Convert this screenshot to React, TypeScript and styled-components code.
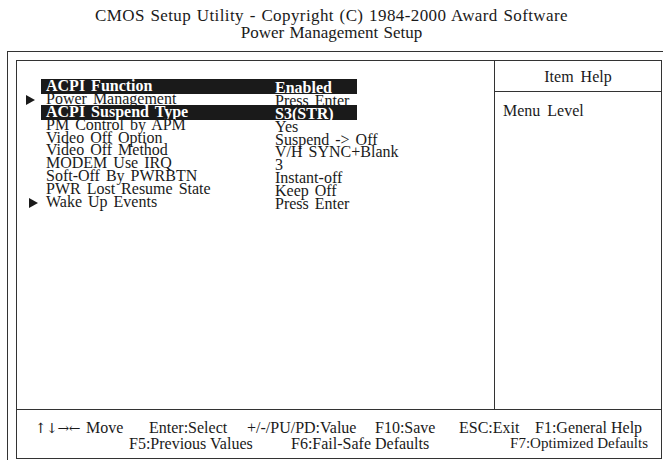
import React from "react";
import styled, {createGlobalStyle} from "styled-components";

const GlobalStyle = createGlobalStyle`
    html, body {
        margin: 0;
        padding: 0;
        background: #fff;
        overflow: hidden;
    }
    body {
        font-family: "Liberation Serif", "Times New Roman", serif;
        color: #1a1a1a;
    }
`;

const StyledHeader = styled.header`
    display: flex;
    flex-direction: column;
    align-items: center;
    padding-top: 7px;
    font-size: 17px;
    line-height: 17px;
    height: 51px;
    box-sizing: border-box;
`;

const StyledTitleLine = styled.div<{ $spacing?: number }>`
    letter-spacing: ${({$spacing}) => $spacing ?? 0}px;
    word-spacing: 1px;
`;

const StyledOuterFrame = styled.div`
    margin-left: 7px;
    padding: 8px 0 4px 8px;
    border-top: 1px solid #333;
    border-left: 1px solid #333;
`;

const StyledScreen = styled.div`
    width: 646px;
    border: 1px solid #333;
    box-sizing: border-box;
    display: grid;
    grid-template-columns: 478px 1fr;
    grid-template-rows: 349px 48px;
`;

const StyledMain = styled.main`
    border-right: 1px solid #333;
    border-bottom: 1px solid #333;
    padding-top: 18px;
    display: flex;
    flex-direction: column;
`;

const StyledRow = styled.div`
    display: grid;
    grid-template-columns: 24px 234px 82px;
    height: 12.9px;
    font-size: 16px;
    line-height: 13px;
`;

const StyledArrow = styled.span<{ $shift?: number }>`
    display: flex;
    align-items: center;
    justify-content: flex-end;
    padding-right: ${({$shift}) => 6 - ($shift ?? 0)}px;
    padding-top: 1px;
`;

const StyledLabel = styled.span<{ $active?: boolean }>`
    padding-left: 5px;
    white-space: nowrap;
    word-spacing: 2px;
    background: ${({$active}) => ($active ? "#1a1a1a" : "transparent")};
    color: ${({$active}) => ($active ? "#fff" : "#1a1a1a")};
    font-weight: ${({$active}) => ($active ? 700 : 400)};
`;

const StyledValue = styled.span<{ $active?: boolean }>`
    padding-top: 2px;
    white-space: nowrap;
    word-spacing: 2px;
    background: ${({$active}) => ($active ? "#1a1a1a" : "transparent")};
    color: ${({$active}) => ($active ? "#fff" : "#1a1a1a")};
    font-weight: ${({$active}) => ($active ? 700 : 400)};
`;

const StyledHelp = styled.aside`
    border-bottom: 1px solid #333;
    display: flex;
    flex-direction: column;
    font-size: 16px;
`;

const StyledHelpTitle = styled.div`
    height: 31px;
    border-bottom: 1px solid #333;
    display: flex;
    align-items: center;
    justify-content: center;
    word-spacing: 3px;
    padding-top: 1px;
    box-sizing: border-box;
`;

const StyledHelpText = styled.div`
    padding: 10px 0 0 8px;
    word-spacing: 3px;
`;

const StyledFooter = styled.footer`
    grid-column: 1 / span 2;
    display: flex;
    flex-direction: column;
    padding-top: 10px;
    font-size: 16px;
    line-height: 15px;
`;

const StyledFooterLine = styled.div<{ $columns: string }>`
    display: grid;
    grid-template-columns: ${({$columns}) => $columns};
    white-space: nowrap;
`;

const StyledKeyHint = styled.span<{ $end?: boolean, $size?: number }>`
    justify-self: ${({$end}) => ($end ? "end" : "start")};
    padding-right: ${({$end}) => ($end ? 13 : 0)}px;
    font-size: ${({$size}) => $size ?? 16}px;
`;

const StyledArrowKeys = styled.span`
    font-family: "DejaVu Serif", "Liberation Serif", serif;
    font-size: 14px;
    letter-spacing: -0.5px;
    margin-right: 6px;
`;

function Arrow() {
    return (
        <svg width="9" height="10" viewBox="0 0 9 10">
            <path d="M0 0 L9 5 L0 10 Z" fill="#1a1a1a"/>
        </svg>
    );
}

type Item = { label: string, value: string, active?: boolean, submenu?: boolean, shift?: number };

const items: Item[] = [
    {label: "ACPI Function", value: "Enabled", active: true},
    {label: "Power Management", value: "Press Enter", submenu: true},
    {label: "ACPI Suspend Type", value: "S3(STR)", active: true},
    {label: "PM Control by APM", value: "Yes"},
    {label: "Video Off Option", value: "Suspend -> Off"},
    {label: "Video Off Method", value: "V/H SYNC+Blank"},
    {label: "MODEM Use IRQ", value: "3"},
    {label: "Soft-Off By PWRBTN", value: "Instant-off"},
    {label: "PWR Lost Resume State", value: "Keep Off"},
    {label: "Wake Up Events", value: "Press Enter", submenu: true, shift: 3},
];

export default function App() {
    return (
        <>
            <GlobalStyle/>
            <StyledHeader>
                <StyledTitleLine $spacing={0.4}>CMOS Setup Utility - Copyright (C) 1984-2000 Award Software</StyledTitleLine>
                <StyledTitleLine>Power Management Setup</StyledTitleLine>
            </StyledHeader>
            <StyledOuterFrame>
                <StyledScreen>
                    <StyledMain>
                        {items.map((item) => (
                            <StyledRow key={item.label}>
                                <StyledArrow $shift={item.shift}>{item.submenu && <Arrow/>}</StyledArrow>
                                <StyledLabel $active={item.active}>{item.label}</StyledLabel>
                                <StyledValue $active={item.active}>{item.value}</StyledValue>
                            </StyledRow>
                        ))}
                    </StyledMain>
                    <StyledHelp>
                        <StyledHelpTitle>Item Help</StyledHelpTitle>
                        <StyledHelpText>Menu Level</StyledHelpText>
                    </StyledHelp>
                    <StyledFooter>
                        <StyledFooterLine $columns="18px 114px 98px 128px 84px 76px 1fr">
                            <span/>
                            <StyledKeyHint><StyledArrowKeys>↑↓→←</StyledArrowKeys>Move</StyledKeyHint>
                            <StyledKeyHint>Enter:Select</StyledKeyHint>
                            <StyledKeyHint>+/-/PU/PD:Value</StyledKeyHint>
                            <StyledKeyHint>F10:Save</StyledKeyHint>
                            <StyledKeyHint>ESC:Exit</StyledKeyHint>
                            <StyledKeyHint>F1:General Help</StyledKeyHint>
                        </StyledFooterLine>
                        <StyledFooterLine $columns="112px 162px 1fr auto">
                            <span/>
                            <StyledKeyHint>F5:Previous Values</StyledKeyHint>
                            <StyledKeyHint>F6:Fail-Safe Defaults</StyledKeyHint>
                            <StyledKeyHint $end $size={15}>F7:Optimized Defaults</StyledKeyHint>
                        </StyledFooterLine>
                    </StyledFooter>
                </StyledScreen>
            </StyledOuterFrame>
        </>
    );
}
